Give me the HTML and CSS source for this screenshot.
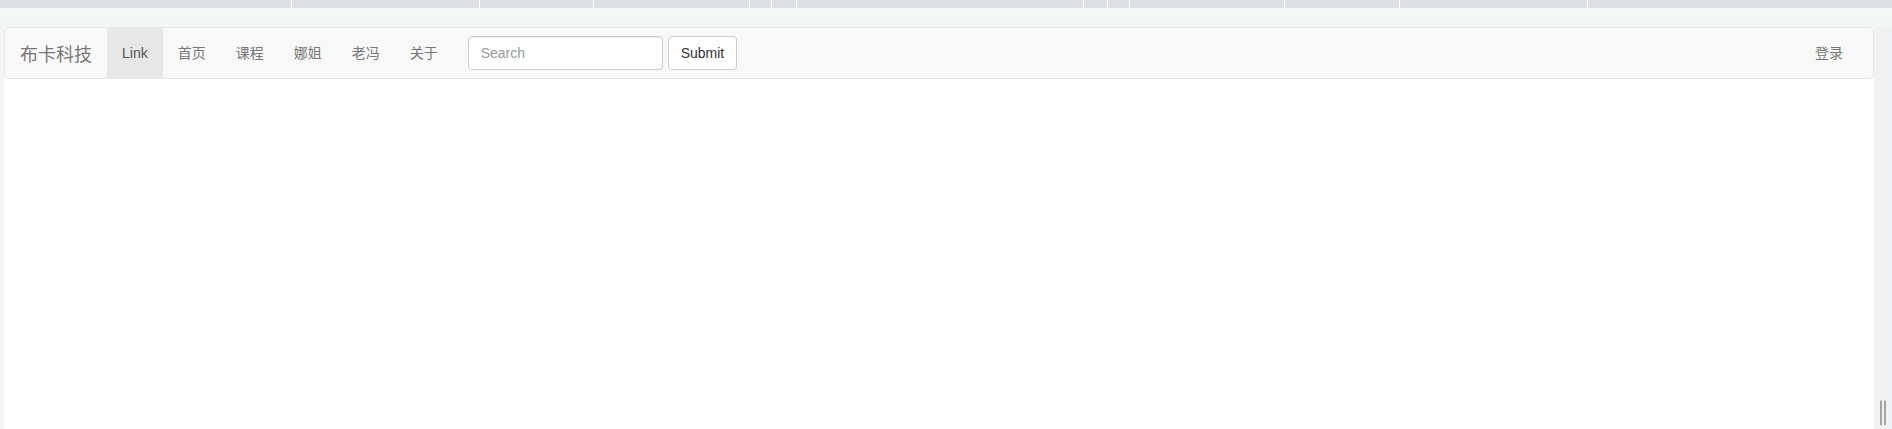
FILE: index.html
```
<!DOCTYPE html>
<html lang="zh">
<head>
<meta charset="utf-8">
<title>布卡科技</title>
<link rel="stylesheet" href="styles.css">
</head>
<body>
<div class="tabs">
  <div class="tab"></div><div class="tab"></div><div class="tab"></div><div class="tab"></div>
  <div class="tab"></div><div class="tab"></div><div class="tab"></div><div class="tab"></div>
  <div class="tab"></div><div class="tab"></div><div class="tab"></div><div class="tab"></div>
  <div class="tab last"></div>
</div>
<div class="strip"></div>
<div class="stage">
  <div class="gutter"></div>
  <div class="page">
    <nav class="navbar">
      <a class="brand" href="#">布卡科技</a>
      <ul class="nav">
        <li class="active"><a href="#">Link</a></li>
        <li><a href="#">首页</a></li>
        <li><a href="#">课程</a></li>
        <li><a href="#">娜姐</a></li>
        <li><a href="#">老冯</a></li>
        <li><a href="#">关于</a></li>
      </ul>
      <form class="search">
        <input class="field" type="text" placeholder="Search">
        <button class="btn" type="button">Submit</button>
      </form>
      <ul class="nav nav-right">
        <li><a href="#">登录</a></li>
      </ul>
    </nav>
  </div>
  <div class="side">
    <div class="grip"><span></span><span></span></div>
  </div>
</div>
</body>
</html>
```
FILE: styles.css
```
* { box-sizing: border-box; }
html, body { margin: 0; height: 100%; }
body {
  background: #fff;
  font-family: "Liberation Sans", Arial, "Noto Sans CJK SC", sans-serif;
  font-size: 14px;
  line-height: 20px;
  color: #333;
  overflow: hidden;
}
.tabs {
  display: grid;
  grid-template-columns: 292px 188px 114px 156px 22px 25px 287px 24px 22px 155px 115px 188px 1fr;
  height: 8px;
  background: #dee0e4;
}
.tab { border-right: 1px solid #fff; }
.tab.last { border-right: 0; }
.strip {
  height: 19px;
  background: linear-gradient(#f7f9f8, #f3f4f4);
}
.stage {
  display: flex;
  height: 402px;
}
.gutter {
  width: 4px;
  background: #f3f4f5;
}
.page {
  flex: 1;
  background: #fff;
}
.side {
  width: 18px;
  background: #f0f1f3;
  display: flex;
  flex-direction: column;
  justify-content: flex-end;
  padding: 0 0 4px 6px;
}
.grip { display: flex; gap: 2px; height: 25px; }
.grip span {
  width: 2px;
  background: #a4a4a4;
  border-top: 1px solid #d0d0d0;
}
.navbar {
  display: flex;
  align-items: center;
  height: 52px;
  background: #f8f8f8;
  border: 1px solid #e7e7e7;
  border-radius: 4px;
}
.brand {
  padding: 15px;
  font-size: 18px;
  line-height: 20px;
  color: #777;
  text-decoration: none;
  font-family: "Noto Sans CJK SC", sans-serif;
}
.nav {
  display: flex;
  list-style: none;
  margin: 0;
  padding: 0;
  height: 50px;
}
.nav a {
  display: block;
  padding: 15px;
  line-height: 20px;
  color: #777;
  text-decoration: none;
}
.nav li.active a { background: #e7e7e7; color: #555; }
.nav-right { margin-left: auto; margin-right: 15px; }
.search {
  display: flex;
  gap: 5px;
  margin: 0 0 0 15px;
}
.field {
  width: 195px;
  height: 34px;
  padding: 6px 12px;
  font: inherit;
  color: #555;
  background: #fff;
  border: 1px solid #ccc;
  border-radius: 4px;
  box-shadow: inset 0 1px 1px rgba(0,0,0,.075);
}
.field::placeholder { color: #999; }
.btn {
  height: 34px;
  padding: 6px 12px;
  font: inherit;
  color: #333;
  background: #fff;
  border: 1px solid #ccc;
  border-radius: 4px;
}
```
